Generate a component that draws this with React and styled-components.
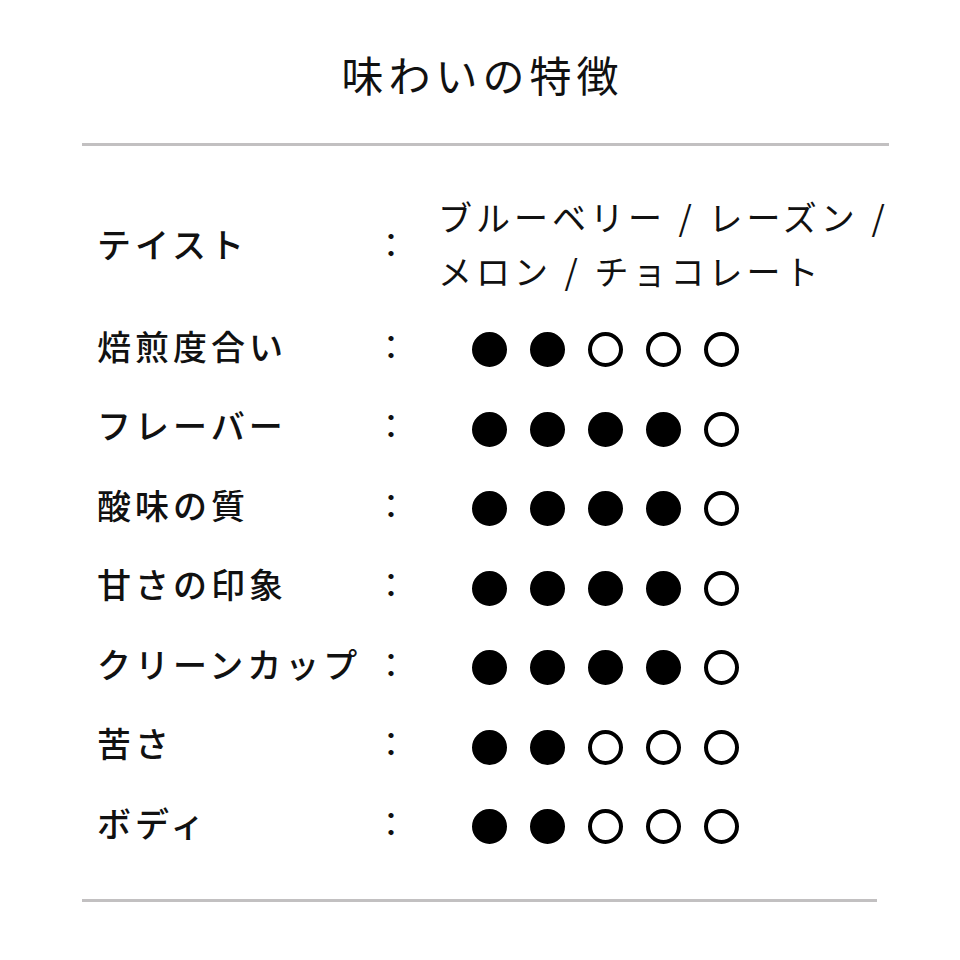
import styled, { createGlobalStyle } from "styled-components";

const GlobalStyle = createGlobalStyle`
  body {
    margin: 0;
    background: #ffffff;
    font-family: "Noto Sans CJK JP", "Noto Sans", sans-serif;
    color: #111111;
  }
`;

const rows = [
  { label: "焙煎度合い", value: 2 },
  { label: "フレーバー", value: 4 },
  { label: "酸味の質", value: 4 },
  { label: "甘さの印象", value: 4 },
  { label: "クリーンカップ", value: 4 },
  { label: "苦さ", value: 2 },
  { label: "ボディ", value: 2 },
];

const App = () => {
  return (
    <>
      <GlobalStyle />
      <Page>
        <Title>味わいの特徴</Title>
        <Rule />
        <Table>
          <TasteRow>
            <Label>テイスト</Label>
            <Colon>：</Colon>
            <TasteText>
              ブルーベリー / レーズン /
              <br />
              メロン / チョコレート
            </TasteText>
          </TasteRow>
          {rows.map((row) => (
            <Row key={row.label}>
              <Label>{row.label}</Label>
              <Colon>：</Colon>
              <Dots>
                {[0, 1, 2, 3, 4].map((i) => (
                  <Dot key={i} filled={i < row.value} />
                ))}
              </Dots>
            </Row>
          ))}
        </Table>
        <Rule short />
      </Page>
    </>
  );
};

export default App;

const Page = styled.div`
  width: 960px;
  height: 960px;
  display: flex;
  flex-direction: column;
  padding-top: 53px;
  box-sizing: border-box;
`;

const Title = styled.h1`
  margin: 0 0 48px;
  font-size: 42px;
  line-height: 1;
  font-weight: 400;
  letter-spacing: 5px;
  text-align: center;
  padding-left: 5px;
`;

const Rule = styled.div`
  height: 3px;
  background: #c2c0c1;
  margin-left: 82px;
  width: ${(props) => (props.short ? "795px" : "807px")};
`;

const Table = styled.div`
  display: flex;
  flex-direction: column;
  padding: 44px 0 36px 97px;
`;

const Row = styled.div`
  display: grid;
  grid-template-columns: 283px 62px 1fr;
  align-items: center;
  height: 79.5px;
`;

const TasteRow = styled(Row)`
  height: 108px;
  margin-bottom: 8px;
`;

const Label = styled.div`
  font-size: 34px;
  line-height: 1;
  font-weight: 500;
  letter-spacing: 4px;
  white-space: nowrap;
`;

const Colon = styled.div`
  font-size: 34px;
  line-height: 1;
  font-weight: 400;
  margin-left: -6px;
`;

const TasteText = styled.div`
  font-size: 34px;
  line-height: 54px;
  font-weight: 400;
  letter-spacing: 4px;
  word-spacing: 1px;
  white-space: nowrap;
  margin-left: -4px;
`;

const Dots = styled.div`
  display: flex;
  gap: 23px;
  padding-left: 30px;
  padding-top: 8px;
`;

const Dot = styled.span`
  width: 35px;
  height: 35px;
  border-radius: 50%;
  box-sizing: border-box;
  border: 4px solid #000000;
  background: ${(props) => (props.filled ? "#000000" : "#ffffff")};
`;
